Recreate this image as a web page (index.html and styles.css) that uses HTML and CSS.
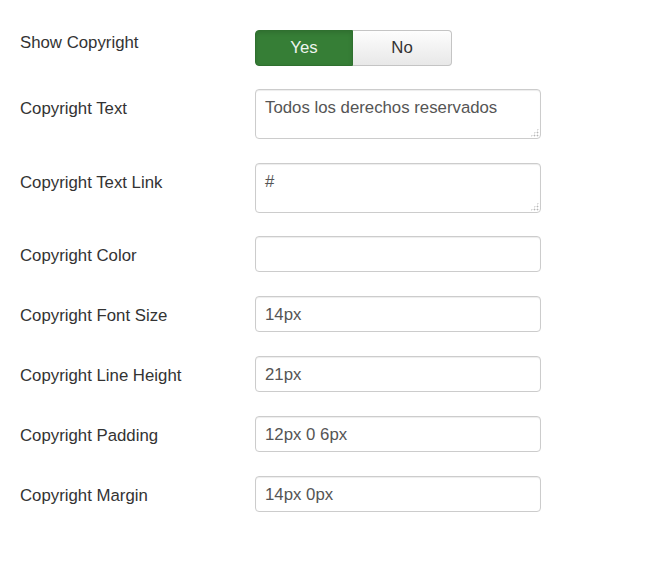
FILE: index.html
```html
<!DOCTYPE html>
<html lang="es">
<head>
<meta charset="utf-8">
<title>Copyright settings</title>
<link rel="stylesheet" href="styles.css">
</head>
<body>
<form class="form">
  <div class="row row-toggle">
    <label class="label label-toggle">Show Copyright</label>
    <div class="toggle">
      <span class="opt opt-yes">Yes</span>
      <span class="opt opt-no">No</span>
    </div>
  </div>
  <div class="row">
    <label class="label">Copyright Text</label>
    <div class="area-wrap">
      <textarea class="field area">Todos los derechos reservados</textarea>
      <span class="grip"></span>
    </div>
  </div>
  <div class="row row-tight">
    <label class="label">Copyright Text Link</label>
    <div class="area-wrap">
      <textarea class="field area">#</textarea>
      <span class="grip"></span>
    </div>
  </div>
  <div class="row">
    <label class="label">Copyright Color</label>
    <input class="field input" type="text" value="">
  </div>
  <div class="row">
    <label class="label">Copyright Font Size</label>
    <input class="field input" type="text" value="14px">
  </div>
  <div class="row">
    <label class="label">Copyright Line Height</label>
    <input class="field input" type="text" value="21px">
  </div>
  <div class="row">
    <label class="label">Copyright Padding</label>
    <input class="field input" type="text" value="12px 0 6px">
  </div>
  <div class="row">
    <label class="label">Copyright Margin</label>
    <input class="field input" type="text" value="14px 0px">
  </div>
</form>
</body>
</html>
```
FILE: styles.css
```css
html, body {
  margin: 0;
  padding: 0;
  background: #fff;
}
body {
  font-family: "Liberation Sans", Arial, sans-serif;
  font-size: 16.8px;
  line-height: 20px;
  color: #333;
}
.form {
  padding: 30px 0 0 20px;
}
.row {
  display: flex;
  align-items: flex-start;
  margin-bottom: 24px;
}
.row-toggle {
  margin-bottom: 23px;
}
.row-tight {
  margin-bottom: 23px;
}
.label {
  width: 235px;
  flex: none;
  padding-top: 10px;
  color: #333;
}
.label-toggle {
  padding-top: 3px;
}
.toggle {
  display: flex;
  height: 36px;
  box-sizing: border-box;
}
.opt {
  display: flex;
  align-items: center;
  justify-content: center;
  box-sizing: border-box;
  height: 36px;
  font-size: 16.8px;
}
.opt-yes {
  width: 98px;
  background: #367e36;
  color: #eef5ee;
  border: 1px solid #2f702f;
  border-radius: 4px 0 0 4px;
  box-shadow: inset 0 2px 4px rgba(0,0,0,0.12);
}
.opt-no {
  width: 99px;
  background: linear-gradient(#fdfdfd, #e8e8e8);
  color: #333;
  border: 1px solid #c4c4c4;
  border-left: none;
  border-radius: 0 4px 4px 0;
}
.field {
  box-sizing: border-box;
  width: 286px;
  border: 1px solid #ccc;
  border-radius: 4px;
  background: #fff;
  box-shadow: inset 0 1px 1px rgba(0,0,0,0.075);
  font-family: "Liberation Sans", Arial, sans-serif;
  font-size: 16.8px;
  line-height: 20px;
  color: #555;
  margin: 0;
  outline: none;
}
.input {
  height: 36px;
  padding: 8px 9px 6px;
}
.area-wrap {
  position: relative;
  width: 286px;
  height: 50px;
}
.area {
  display: block;
  height: 50px;
  padding: 8px 9px 6px;
  resize: none;
  overflow: hidden;
}
.grip {
  position: absolute;
  right: 2px;
  bottom: 2px;
  width: 9px;
  height: 9px;
  background-image: radial-gradient(circle, #b5b5b5 0.8px, transparent 1.1px);
  background-size: 3px 3px;
  clip-path: polygon(100% 0, 100% 100%, 0 100%);
}
```
